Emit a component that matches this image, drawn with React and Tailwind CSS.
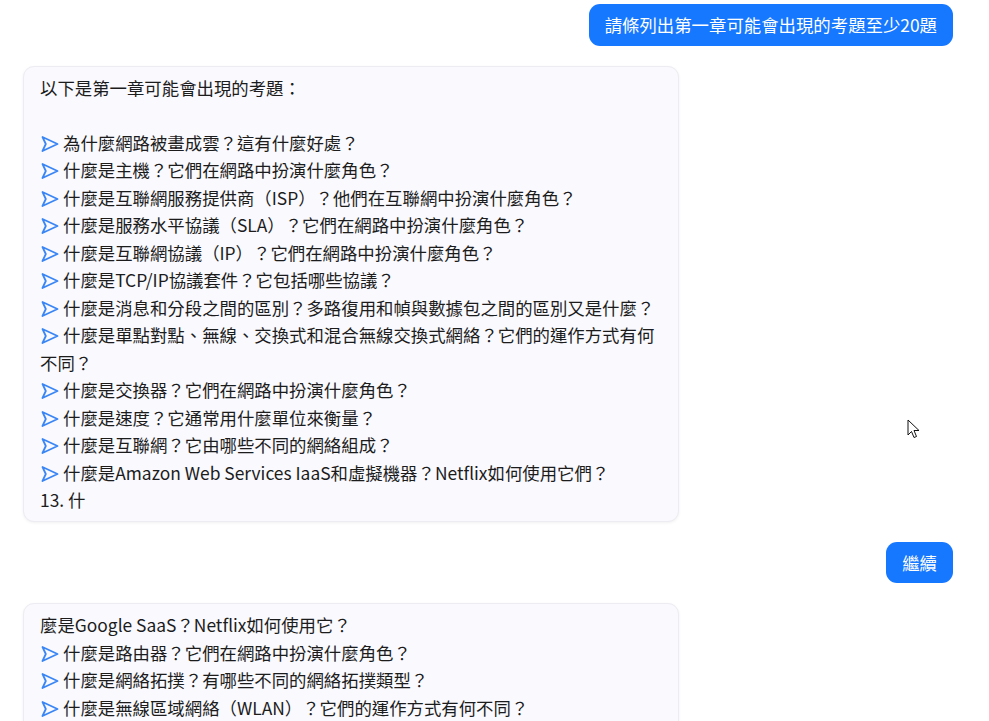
import React from 'react';

const firstList = [
  '為什麼網路被畫成雲？這有什麼好處？',
  '什麼是主機？它們在網路中扮演什麼角色？',
  '什麼是互聯網服務提供商（ISP）？他們在互聯網中扮演什麼角色？',
  '什麼是服務水平協議（SLA）？它們在網路中扮演什麼角色？',
  '什麼是互聯網協議（IP）？它們在網路中扮演什麼角色？',
  '什麼是TCP/IP協議套件？它包括哪些協議？',
  '什麼是消息和分段之間的區別？多路復用和幀與數據包之間的區別又是什麼？',
  '什麼是單點對點、無線、交換式和混合無線交換式網絡？它們的運作方式有何不同？',
  '什麼是交換器？它們在網路中扮演什麼角色？',
  '什麼是速度？它通常用什麼單位來衡量？',
  '什麼是互聯網？它由哪些不同的網絡組成？',
  '什麼是Amazon Web Services IaaS和虛擬機器？Netflix如何使用它們？',
];

const secondList = [
  '什麼是路由器？它們在網路中扮演什麼角色？',
  '什麼是網絡拓撲？有哪些不同的網絡拓撲類型？',
  '什麼是無線區域網絡（WLAN）？它們的運作方式有何不同？',
  '什麼是頻寬？它如何影響網絡的性能？',
];

const Arrow = () => (
  <svg
    width="18"
    height="18"
    viewBox="0 0 18 18"
    fill="none"
    stroke="#3b86f5"
    strokeWidth="1.8"
    strokeLinejoin="round"
    className="inline-block align-[-3px] mr-[4px] ml-[1px]"
  >
    <path d="M1.5 2 L16.5 9 L1.5 16 L4.8 9 Z" />
  </svg>
);

const UserBubble = ({ children }) => (
  <div className="flex justify-end">
    <div className="bg-[#1677ff] text-white rounded-[11px] px-4 py-[7px]">{children}</div>
  </div>
);

const BotCard = ({ children }) => (
  <div className="w-[656px] bg-[#f9f9fe] border border-[#ececf2] rounded-[11px] shadow-[0_1px_3px_rgba(0,0,0,0.06)] px-4 py-[7px] text-[#1c1c1c]">
    {children}
  </div>
);

const Item = ({ text }) => (
  <div>
    <Arrow />
    {text}
  </div>
);

export default function App() {
  return (
    <div
      className="relative h-[721px] overflow-hidden bg-white text-[17.4px] leading-[27.5px]"
      style={{ fontFamily: '"Noto Sans CJK TC", "Noto Sans", sans-serif' }}
    >
      <div className="flex flex-col gap-5 pt-[4px] pl-[23px] pr-[36px]">
        <UserBubble>請條列出第一章可能會出現的考題至少20題</UserBubble>
        <BotCard>
          <div>以下是第一章可能會出現的考題：</div>
          <div className="h-[27.5px]" />
          {firstList.map((t) => (
            <Item key={t} text={t} />
          ))}
          <div>13. 什</div>
        </BotCard>
        <UserBubble>繼續</UserBubble>
        <BotCard>
          <div>麼是Google SaaS？Netflix如何使用它？</div>
          {secondList.map((t) => (
            <Item key={t} text={t} />
          ))}
        </BotCard>
      </div>
      <svg
        width="14"
        height="22"
        viewBox="0 0 14 22"
        className="absolute left-[907px] top-[419px]"
      >
        <path
          d="M1 1 L1 16 L4.5 12.5 L7 18.5 L9.5 17.5 L7 11.5 L12 11.5 Z"
          fill="white"
          stroke="#111"
          strokeWidth="1"
          strokeLinejoin="round"
        />
      </svg>
    </div>
  );
}
